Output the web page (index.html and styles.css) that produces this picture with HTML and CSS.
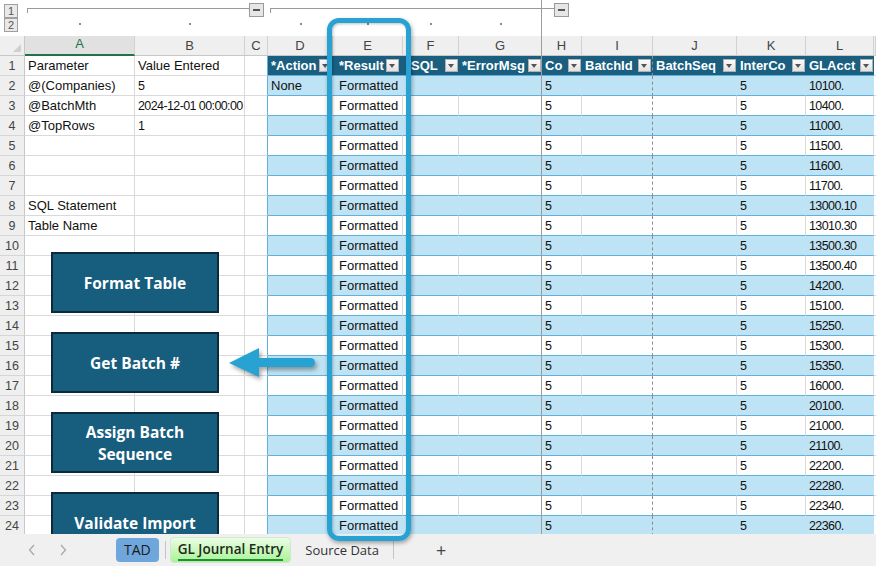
FILE: index.html
```html
<!DOCTYPE html>
<html lang="en">
<head>
  <meta charset="UTF-8">
  <title>GL Journal Entry</title>
  <link rel="stylesheet" href="styles.css">
</head>
<body>
  <div class="app">
    <div class="sheet">
      <!-- outline (group) bar -->
      <div class="outline">
        <div class="levels"><span class="lvl">1</span><span class="lvl">2</span></div>
        <div class="grp g1"><span class="bar"></span><span class="minus"></span></div>
        <div class="grp g2"><span class="bar"></span><span class="minus"></span></div>
        <span class="dot ca"></span><span class="dot cb"></span><span class="dot cd"></span>
        <span class="dot ce"></span><span class="dot cf"></span><span class="dot cg"></span>
      </div>

      <div class="row colhead">
        <div class="corner"></div>
        <div class="ch sel">A</div><div class="ch">B</div><div class="ch">C</div><div class="ch">D</div>
        <div class="ch">E</div><div class="ch">F</div><div class="ch">G</div><div class="ch">H</div>
        <div class="ch">I</div><div class="ch">J</div><div class="ch">K</div><div class="ch">L</div><div class="ch"></div>
      </div>

      <div class="row">
        <div class="rh">1</div><div class="c">Parameter</div><div class="c">Value Entered</div><div class="c cl"></div>
        <div class="h">*Action<span class="dd"></span></div>
        <div class="h e">*Result<span class="dd"></span></div>
        <div class="h f">*SQL<span class="dd"></span></div>
        <div class="h">*ErrorMsg<span class="dd"></span></div>
        <div class="h">Co<span class="dd"></span></div>
        <div class="h pb">BatchId<span class="dd"></span></div>
        <div class="h">BatchSeq<span class="dd"></span></div>
        <div class="h">InterCo<span class="dd"></span></div>
        <div class="h">GLAcct<span class="dd"></span></div>
        <div class="c"></div>
      </div>

      <div class="row band">
        <div class="rh">2</div><div class="c">@(Companies)</div><div class="c n">5</div><div class="c cl"></div>
        <div class="t">None</div><div class="t e">Formatted</div><div class="t"></div><div class="t"></div><div class="t n">5</div>
        <div class="t pb"></div><div class="t"></div><div class="t n">5</div><div class="t n">10100.</div><div class="c"></div>
      </div>
      <div class="row">
        <div class="rh">3</div><div class="c">@BatchMth</div><div class="c n">2024-12-01 00:00:00</div><div class="c cl"></div>
        <div class="t"></div><div class="t e">Formatted</div><div class="t"></div><div class="t"></div><div class="t n">5</div>
        <div class="t pb"></div><div class="t"></div><div class="t n">5</div><div class="t n">10400.</div><div class="c"></div>
      </div>
      <div class="row band">
        <div class="rh">4</div><div class="c">@TopRows</div><div class="c n">1</div><div class="c cl"></div>
        <div class="t"></div><div class="t e">Formatted</div><div class="t"></div><div class="t"></div><div class="t n">5</div>
        <div class="t pb"></div><div class="t"></div><div class="t n">5</div><div class="t n">11000.</div><div class="c"></div>
      </div>
      <div class="row">
        <div class="rh">5</div><div class="c"></div><div class="c"></div><div class="c cl"></div>
        <div class="t"></div><div class="t e">Formatted</div><div class="t"></div><div class="t"></div><div class="t n">5</div>
        <div class="t pb"></div><div class="t"></div><div class="t n">5</div><div class="t n">11500.</div><div class="c"></div>
      </div>
      <div class="row band">
        <div class="rh">6</div><div class="c"></div><div class="c"></div><div class="c cl"></div>
        <div class="t"></div><div class="t e">Formatted</div><div class="t"></div><div class="t"></div><div class="t n">5</div>
        <div class="t pb"></div><div class="t"></div><div class="t n">5</div><div class="t n">11600.</div><div class="c"></div>
      </div>
      <div class="row">
        <div class="rh">7</div><div class="c"></div><div class="c"></div><div class="c cl"></div>
        <div class="t"></div><div class="t e">Formatted</div><div class="t"></div><div class="t"></div><div class="t n">5</div>
        <div class="t pb"></div><div class="t"></div><div class="t n">5</div><div class="t n">11700.</div><div class="c"></div>
      </div>
      <div class="row band">
        <div class="rh">8</div><div class="c">SQL Statement</div><div class="c"></div><div class="c cl"></div>
        <div class="t"></div><div class="t e">Formatted</div><div class="t"></div><div class="t"></div><div class="t n">5</div>
        <div class="t pb"></div><div class="t"></div><div class="t n">5</div><div class="t n">13000.10</div><div class="c"></div>
      </div>
      <div class="row">
        <div class="rh">9</div><div class="c">Table Name</div><div class="c"></div><div class="c cl"></div>
        <div class="t"></div><div class="t e">Formatted</div><div class="t"></div><div class="t"></div><div class="t n">5</div>
        <div class="t pb"></div><div class="t"></div><div class="t n">5</div><div class="t n">13010.30</div><div class="c"></div>
      </div>
      <div class="row band">
        <div class="rh">10</div><div class="c"></div><div class="c"></div><div class="c cl"></div>
        <div class="t"></div><div class="t e">Formatted</div><div class="t"></div><div class="t"></div><div class="t n">5</div>
        <div class="t pb"></div><div class="t"></div><div class="t n">5</div><div class="t n">13500.30</div><div class="c"></div>
      </div>
      <div class="row">
        <div class="rh">11</div><div class="c"></div><div class="c"></div><div class="c cl"></div>
        <div class="t"></div><div class="t e">Formatted</div><div class="t"></div><div class="t"></div><div class="t n">5</div>
        <div class="t pb"></div><div class="t"></div><div class="t n">5</div><div class="t n">13500.40</div><div class="c"></div>
      </div>
      <div class="row band">
        <div class="rh">12</div><div class="c"></div><div class="c"></div><div class="c cl"></div>
        <div class="t"></div><div class="t e">Formatted</div><div class="t"></div><div class="t"></div><div class="t n">5</div>
        <div class="t pb"></div><div class="t"></div><div class="t n">5</div><div class="t n">14200.</div><div class="c"></div>
      </div>
      <div class="row">
        <div class="rh">13</div><div class="c"></div><div class="c"></div><div class="c cl"></div>
        <div class="t"></div><div class="t e">Formatted</div><div class="t"></div><div class="t"></div><div class="t n">5</div>
        <div class="t pb"></div><div class="t"></div><div class="t n">5</div><div class="t n">15100.</div><div class="c"></div>
      </div>
      <div class="row band">
        <div class="rh">14</div><div class="c"></div><div class="c"></div><div class="c cl"></div>
        <div class="t"></div><div class="t e">Formatted</div><div class="t"></div><div class="t"></div><div class="t n">5</div>
        <div class="t pb"></div><div class="t"></div><div class="t n">5</div><div class="t n">15250.</div><div class="c"></div>
      </div>
      <div class="row">
        <div class="rh">15</div><div class="c"></div><div class="c"></div><div class="c cl"></div>
        <div class="t"></div><div class="t e">Formatted</div><div class="t"></div><div class="t"></div><div class="t n">5</div>
        <div class="t pb"></div><div class="t"></div><div class="t n">5</div><div class="t n">15300.</div><div class="c"></div>
      </div>
      <div class="row band">
        <div class="rh">16</div><div class="c"></div><div class="c"></div><div class="c cl"></div>
        <div class="t"></div><div class="t e">Formatted</div><div class="t"></div><div class="t"></div><div class="t n">5</div>
        <div class="t pb"></div><div class="t"></div><div class="t n">5</div><div class="t n">15350.</div><div class="c"></div>
      </div>
      <div class="row">
        <div class="rh">17</div><div class="c"></div><div class="c"></div><div class="c cl"></div>
        <div class="t"></div><div class="t e">Formatted</div><div class="t"></div><div class="t"></div><div class="t n">5</div>
        <div class="t pb"></div><div class="t"></div><div class="t n">5</div><div class="t n">16000.</div><div class="c"></div>
      </div>
      <div class="row band">
        <div class="rh">18</div><div class="c"></div><div class="c"></div><div class="c cl"></div>
        <div class="t"></div><div class="t e">Formatted</div><div class="t"></div><div class="t"></div><div class="t n">5</div>
        <div class="t pb"></div><div class="t"></div><div class="t n">5</div><div class="t n">20100.</div><div class="c"></div>
      </div>
      <div class="row">
        <div class="rh">19</div><div class="c"></div><div class="c"></div><div class="c cl"></div>
        <div class="t"></div><div class="t e">Formatted</div><div class="t"></div><div class="t"></div><div class="t n">5</div>
        <div class="t pb"></div><div class="t"></div><div class="t n">5</div><div class="t n">21000.</div><div class="c"></div>
      </div>
      <div class="row band">
        <div class="rh">20</div><div class="c"></div><div class="c"></div><div class="c cl"></div>
        <div class="t"></div><div class="t e">Formatted</div><div class="t"></div><div class="t"></div><div class="t n">5</div>
        <div class="t pb"></div><div class="t"></div><div class="t n">5</div><div class="t n">21100.</div><div class="c"></div>
      </div>
      <div class="row">
        <div class="rh">21</div><div class="c"></div><div class="c"></div><div class="c cl"></div>
        <div class="t"></div><div class="t e">Formatted</div><div class="t"></div><div class="t"></div><div class="t n">5</div>
        <div class="t pb"></div><div class="t"></div><div class="t n">5</div><div class="t n">22200.</div><div class="c"></div>
      </div>
      <div class="row band">
        <div class="rh">22</div><div class="c"></div><div class="c"></div><div class="c cl"></div>
        <div class="t"></div><div class="t e">Formatted</div><div class="t"></div><div class="t"></div><div class="t n">5</div>
        <div class="t pb"></div><div class="t"></div><div class="t n">5</div><div class="t n">22280.</div><div class="c"></div>
      </div>
      <div class="row">
        <div class="rh">23</div><div class="c"></div><div class="c"></div><div class="c cl"></div>
        <div class="t"></div><div class="t e">Formatted</div><div class="t"></div><div class="t"></div><div class="t n">5</div>
        <div class="t pb"></div><div class="t"></div><div class="t n">5</div><div class="t n">22340.</div><div class="c"></div>
      </div>
      <div class="row band">
        <div class="rh">24</div><div class="c"></div><div class="c"></div><div class="c cl"></div>
        <div class="t"></div><div class="t e">Formatted</div><div class="t"></div><div class="t"></div><div class="t n">5</div>
        <div class="t pb"></div><div class="t"></div><div class="t n">5</div><div class="t n">22360.</div><div class="c"></div>
      </div>

      <!-- freeze pane line -->
      <div class="freeze"></div>

      <!-- macro buttons floating over the grid -->
      <div class="macro b1">Format Table</div>
      <div class="macro b2">Get Batch #</div>
      <div class="macro b3">Assign Batch<br>Sequence</div>
      <div class="macro b4">Validate Import</div>
    </div>

    <div class="tabs">
      <svg class="nav" width="8" height="12" viewBox="0 0 8 12"><polyline points="6,1 1.5,6 6,11" fill="none" stroke="#a6a6a6" stroke-width="1.2"/></svg>
      <svg class="nav next" width="8" height="12" viewBox="0 0 8 12"><polyline points="2,1 6.5,6 2,11" fill="none" stroke="#a6a6a6" stroke-width="1.2"/></svg>
      <span class="tab tad">TAD</span>
      <span class="sep"></span>
      <span class="tab active">GL Journal Entry</span>
      <span class="tab">Source Data</span>
      <span class="sep"></span>
      <span class="add">+</span>
    </div>

    <!-- callout frame around column E and arrow -->
    <div class="callout"></div>
    <svg class="arrow" width="100" height="44" viewBox="0 0 100 44">
      <rect x="33" y="15" width="60" height="9" rx="4.5" fill="#27a2d2"/>
      <polygon points="7,20 37,5 37,34" fill="#27a2d2"/>
    </svg>
  </div>
</body>
</html>
```

FILE: styles.css
```css
body {
  margin: 0;
  background: #fff;
  font-family: "Liberation Sans", Arial, sans-serif;
  color: #111;
}
.app {
  position: relative;
  width: 876px;
  height: 566px;
  overflow: hidden;
}
.sheet {
  position: relative;
  height: 534px;
  overflow: hidden;
}

/* shared column widths: row header, A..L, M */
.outline,
.row {
  display: grid;
  grid-template-columns: 25px 110px 110px 23px 65px 70px 56px 83px 40px 71px 84px 69px 68px 1fr;
}

/* outline bar */
.outline {
  height: 36px;
  grid-template-rows: 18px 18px;
}
.levels {
  grid-column: 1;
  grid-row: 1 / 3;
  display: flex;
  flex-direction: column;
  padding: 4px 0 0 4px;
}
.lvl {
  width: 12px;
  height: 12px;
  border: 1px solid #a0a0a0;
  background: #e9e9e9;
  font-size: 11px;
  line-height: 12px;
  text-align: center;
  color: #555;
}
.grp {
  grid-row: 1;
  display: flex;
  align-items: flex-start;
  padding-left: 2px;
}
.g1 { grid-column: 2 / 5; padding-right: 4px; }
.g2 { grid-column: 5 / 10; padding-right: 13px; }
.bar {
  flex: 1;
  height: 4px;
  margin-top: 8px;
  border-top: 1px solid #9a9a9a;
  border-left: 1px solid #9a9a9a;
}
.minus {
  position: relative;
  width: 13px;
  height: 12px;
  margin-top: 3px;
  border: 1px solid #9a9a9a;
  background: #e6e6e6;
}
.minus::after {
  content: "";
  position: absolute;
  left: 3px;
  right: 3px;
  top: 5px;
  height: 2px;
  background: #555;
}
.dot {
  grid-row: 2;
  justify-self: center;
  width: 2px;
  height: 2px;
  margin-top: 5px;
  background: #8a8a8a;
}
.ca { grid-column: 2; }
.cb { grid-column: 3; }
.cd { grid-column: 5; }
.ce { grid-column: 6; }
.cf { grid-column: 7; }
.cg { grid-column: 8; }

/* column headers */
.colhead { height: 18px; }
.corner {
  position: relative;
  background: #efefef;
  border-right: 1px solid #c8c8c8;
  border-bottom: 1px solid #c8c8c8;
}
.corner::after {
  content: "";
  position: absolute;
  right: 3px;
  bottom: 3px;
  border-left: 8px solid transparent;
  border-bottom: 8px solid #d0d0d0;
}
.ch {
  background: #efefef;
  border-right: 1px solid #d2d2d2;
  border-bottom: 1px solid #c8c8c8;
  color: #444;
  font-size: 14px;
  line-height: 17px;
  text-align: center;
}
.ch.sel {
  background: #e1e1e1;
  color: #217346;
  border-bottom: 2px solid #217346;
  line-height: 16px;
}

/* grid rows */
.row { height: 20px; }
.row > div {
  box-sizing: border-box;
  font-size: 13px;
  line-height: 20px;
  white-space: nowrap;
  overflow: hidden;
}
.rh {
  background: #efefef;
  border-right: 1px solid #c8c8c8;
  border-bottom: 1px solid #d6d6d6;
  color: #444;
  text-align: center;
  font-size: 12.5px !important;
}
.c {
  padding-left: 3px;
  border-right: 1px solid #dadada;
  border-bottom: 1px solid #dadada;
}
.c.cl { border-right-color: #62b0dc; }
.t {
  padding-left: 3px;
  border-right: 1px solid #dadada;
  border-bottom: 1px solid #62b0dc;
}
.band .t {
  background: #bee3f4;
  border-right-color: transparent;
}
.t.e { padding-left: 6px; }
.row > .n {
  font-size: 12.5px;
  letter-spacing: -0.6px;
}
.row > .pb,
.band > .pb { border-right: 1px dashed #8c8c8c; }

/* table header row */
.h {
  display: flex;
  align-items: center;
  justify-content: space-between;
  padding: 0 1px 0 3px;
  background: #1a5f80;
  border-bottom: 1px solid #62b0dc;
  color: #fff;
  font-weight: bold;
}
.h.e { padding-left: 6px; padding-right: 4px; }
.dd {
  position: relative;
  flex: none;
  width: 11px;
  height: 11px;
  border: 1px solid #b0b0b0;
  background: linear-gradient(#fbfbfb, #e2e2e2);
}
.dd::after {
  content: "";
  position: absolute;
  left: 2px;
  top: 4px;
  border-left: 3.5px solid transparent;
  border-right: 3.5px solid transparent;
  border-top: 4px solid #555;
}

.freeze {
  position: absolute;
  left: 541px;
  top: 0;
  bottom: 0;
  width: 1px;
  background: #9c9c9c;
}

/* floating macro buttons */
.macro {
  position: absolute;
  left: 51px;
  width: 168px;
  height: 61px;
  box-sizing: border-box;
  display: flex;
  align-items: center;
  justify-content: center;
  text-align: center;
  background: #175d7e;
  border: 2px solid #0d2a3b;
  color: #fff;
  font-family: "Open Sans", sans-serif;
  font-weight: 700;
  font-size: 15.5px;
  line-height: 22px;
}
.b1 { top: 252px; }
.b2 { top: 332px; }
.b3 { top: 412px; }
.b4 { top: 492px; }

/* sheet tabs */
.tabs {
  height: 32px;
  display: flex;
  align-items: center;
  background: #f0f0f0;
  font-family: "Open Sans", sans-serif;
  font-size: 13px;
  color: #333;
}
.nav { margin-left: 28px; }
.nav.next { margin-left: 23px; }
.tab {
  padding: 0 8px;
  line-height: 24px;
}
.tad {
  margin-left: 49px;
  background: #6fa6dc;
  border-radius: 4px;
  color: #1b1b1b;
  font-size: 14px;
}
.sep {
  width: 1px;
  height: 18px;
  margin: 0 4px 0 6px;
  background: #c4c4c4;
}
.active {
  height: 26px;
  box-sizing: border-box;
  padding: 0 7px;
  line-height: 23px;
  border: 1px solid #d4e6cf;
  border-radius: 4px;
  color: #1e2a1e;
  font-weight: 600;
  font-size: 13.5px;
  background-image: linear-gradient(#1f8f3c, #1f8f3c), linear-gradient(#eafde4, #a9f395);
  background-size: calc(100% - 14px) 2px, 100% 100%;
  background-position: 7px 21px, 0 0;
  background-repeat: no-repeat;
}
.active + .tab { margin-left: 6px; }
.add {
  margin-left: 38px;
  font-size: 18px;
  color: #444;
}

/* callout overlays */
.callout {
  position: absolute;
  left: 327px;
  top: 18px;
  width: 84px;
  height: 523px;
  box-sizing: border-box;
  border: 5px solid #27a2d2;
  border-radius: 12px;
  box-shadow: 1px 2px 4px rgba(0, 0, 0, 0.35), inset 1px 1px 3px rgba(0, 0, 0, 0.25);
}
.arrow {
  position: absolute;
  left: 222px;
  top: 343px;
  filter: drop-shadow(2px 3px 2px rgba(0, 0, 0, 0.35));
}
```
